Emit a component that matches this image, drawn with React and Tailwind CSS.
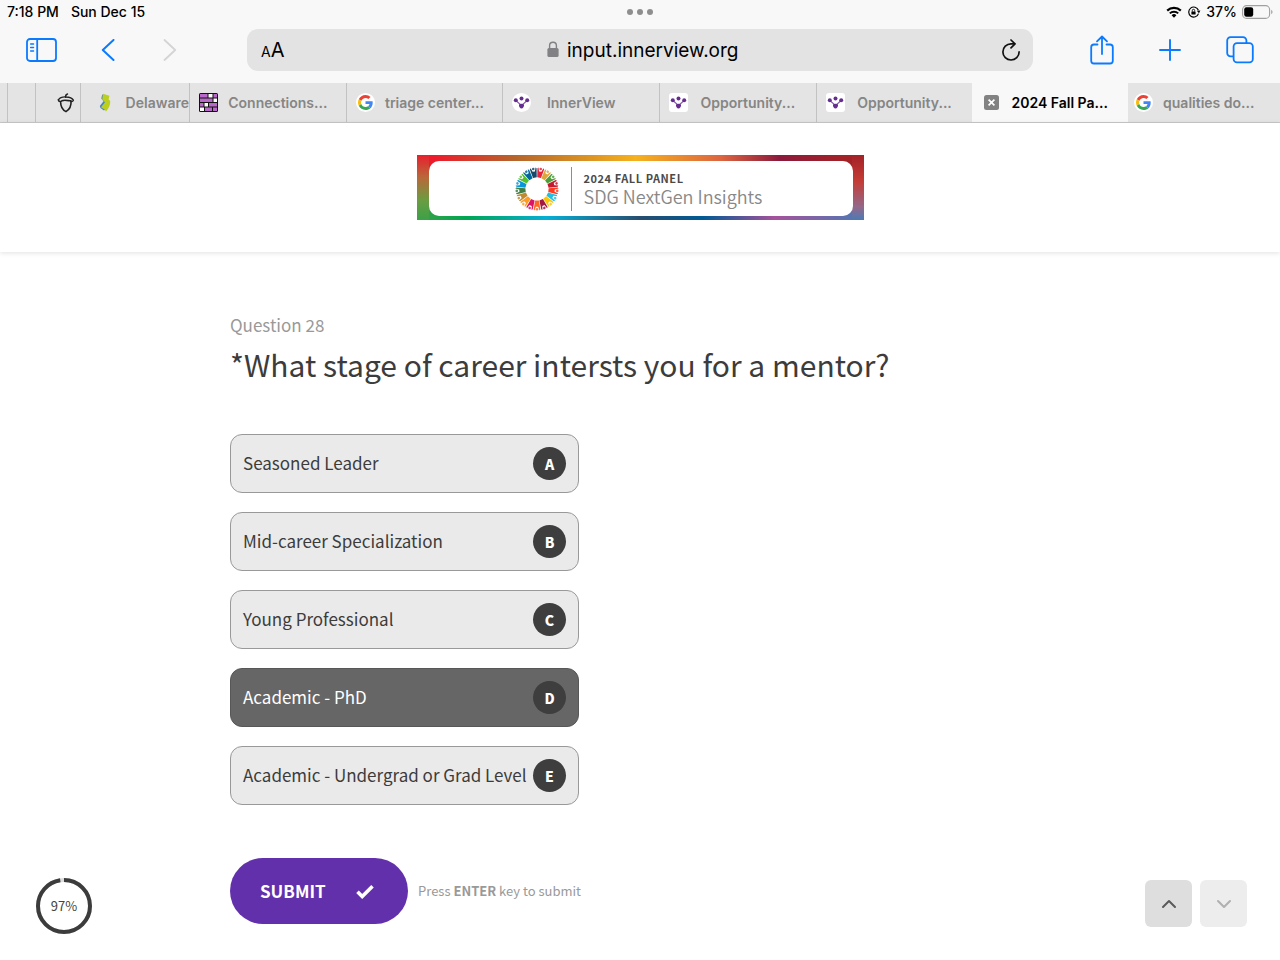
import { useState } from 'react';
import { ChevronDown, ChevronUp } from 'lucide-react';

const tabs = [
  { icon: 'purple', title: 'Connections...' },
  { icon: 'google', title: 'triage center...' },
  { icon: 'innerRound', title: 'InnerView', centered: true },
  { icon: 'inner', title: 'Opportunity...' },
  { icon: 'inner', title: 'Opportunity...' },
  { icon: 'close', title: '2024 Fall Pa...', active: true },
];

const options = [
  { key: 'A', label: 'Seasoned Leader' },
  { key: 'B', label: 'Mid-career Specialization' },
  { key: 'C', label: 'Young Professional' },
  { key: 'D', label: 'Academic - PhD' },
  { key: 'E', label: 'Academic - Undergrad or Grad Level' },
];

const sdgColors = [
  '#e5243b', '#dda63a', '#4c9f38', '#c5192d', '#ff3a21', '#26bde2',
  '#fcc30b', '#a21942', '#fd6925', '#dd1367', '#fd9d24', '#bf8b2e',
  '#3f7e44', '#0a97d9', '#56c02b', '#00689d', '#19486a',
];

function GoogleIcon() {
  return (
    <svg width="19" height="19" viewBox="0 0 19 19" className="shrink-0">
      <circle cx="9.5" cy="9.5" r="9.5" fill="#fff" />
      <g transform="translate(2 2) scale(0.3125)">
        <path fill="#EA4335" d="M24 9.5c3.54 0 6.71 1.22 9.21 3.6l6.85-6.85C35.9 2.38 30.47 0 24 0 14.62 0 6.51 5.38 2.56 13.22l7.98 6.19C12.43 13.72 17.74 9.5 24 9.5z" />
        <path fill="#4285F4" d="M46.98 24.55c0-1.57-.15-3.09-.38-4.55H24v9.02h12.94c-.58 2.96-2.26 5.48-4.78 7.18l7.73 6c4.51-4.18 7.09-10.36 7.09-17.65z" />
        <path fill="#FBBC05" d="M10.53 28.59c-.48-1.45-.76-2.99-.76-4.59s.27-3.14.76-4.59l-7.98-6.19C.92 16.46 0 20.12 0 24c0 3.88.92 7.54 2.56 10.78l7.97-6.19z" />
        <path fill="#34A853" d="M24 48c6.48 0 11.93-2.13 15.89-5.81l-7.73-6c-2.15 1.45-4.92 2.3-8.16 2.3-6.26 0-11.57-4.22-13.47-9.91l-7.98 6.19C6.51 42.62 14.62 48 24 48z" />
      </g>
    </svg>
  );
}

function InnerViewIcon({ round }) {
  return (
    <svg width="19" height="19" viewBox="0 0 19 19" className="shrink-0">
      <rect width="19" height="19" rx={round ? 9.5 : 3} fill="#fff" />
      <path d="M3.8 7.5 9.5 12.5 15.2 7.5" fill="none" stroke="#8a5cae" strokeWidth="1.2" />
      <g fill="#662d91">
        <circle cx="3.8" cy="7.3" r="2" />
        <circle cx="15.2" cy="7.3" r="2" />
        <circle cx="9.5" cy="5.6" r="2" />
        <path d="M7 11.400c1.400-.9 3.600-.9 5 0 .4 2.100-1.100 3.700-2.500 4.200-1.400-.5-2.900-2.100-2.500-4.200z" />
      </g>
    </svg>
  );
}

function ConnectionsIcon() {
  return (
    <svg width="19" height="19" viewBox="0 0 19 19" className="shrink-0">
      <rect width="19" height="19" rx="1.5" fill="#111" />
      <path fill="#b868c8" d="M1 1h7.500v3.500H1zM14.500 1H18v3.500h-3.500zM1 5.500h12.500V9H1zM1 10h3.500v3.500H1zM10 10h8v3.500h-8zM6 14.500h7V18H6zM14 14.500h4V18h-4z" />
      <path fill="#fff" d="M9.500 1h4v3.500h-4zM14.500 5.500H18V9h-3.500zM5.500 10H9v3.500H5.500zM1 14.500h4V18H1z" />
    </svg>
  );
}

function AcornIcon() {
  return (
    <svg width="18" height="20" viewBox="0 0 18 20" fill="none" stroke="#222" strokeLinecap="round" strokeLinejoin="round" className="shrink-0">
      <path d="M8.600 4.200C8.400 2.800 9.200 1.400 10.400 1" strokeWidth="1.600" />
      <path d="M1.400 6.800C2.800 4.600 6 3.800 9.200 4c3.400.1 6 1.200 7.200 3.200-.6 1.400-1.600 1.600-2.600 1.100" strokeWidth="1.300" />
      <path d="M1.400 6.800c.4 2.200 2.400 2.200 3.600 1C7 6.600 12 7.800 14 7.800c.4 4.600-1.200 8.600-5 10.800C5.600 17 3.600 13 3.600 8.800" strokeWidth="1.600" />
    </svg>
  );
}

function DelawareIcon() {
  return (
    <svg width="14" height="19" viewBox="0 0 14 19" className="shrink-0">
      <path fill="#4a86b8" d="M4.200 1.500 3.300 5.500l2.200 2.700-3.700 4.800.7 2 3.500 2.500 2-2-1-13z" />
      <path fill="#bccf1c" d="M5 .8 11.400 2.800l-.8 3.800 1.600 1.400c.2 3.600-1 6.800-4.200 10.600l-1.400-2.200-3.600-2.200L7 9.200 4.200 6.400z" />
    </svg>
  );
}

function CloseIcon() {
  return (
    <svg width="15" height="15" viewBox="0 0 15 15" className="ml-[3px] shrink-0">
      <rect width="15" height="15" rx="2.500" fill="#828282" />
      <path d="m4.600 4.600 5.800 5.800m0-5.800-5.800 5.800" stroke="#fff" strokeWidth="1.700" />
    </svg>
  );
}

function TabIcon({ name }) {
  if (name === 'google') return <GoogleIcon />;
  if (name === 'inner') return <InnerViewIcon />;
  if (name === 'innerRound') return <InnerViewIcon round />;
  if (name === 'purple') return <ConnectionsIcon />;
  return <CloseIcon />;
}

function StatusBar() {
  return (
    <div className="grid h-6 grid-cols-3 items-center px-[7px] text-sm font-medium text-black">
      <div className="flex gap-3">
        <span>7:18 PM</span>
        <span>Sun Dec 15</span>
      </div>
      <div className="flex justify-center gap-1">
        <span className="size-1.5 rounded-full bg-[#8e8e8e]" />
        <span className="size-1.5 rounded-full bg-[#8e8e8e]" />
        <span className="size-1.5 rounded-full bg-[#8e8e8e]" />
      </div>
      <div className="flex items-center justify-end gap-[5px]">
        <svg width="16" height="12" viewBox="0 0 16 12">
          <path d="M1.200 4.600a9.800 9.800 0 0 1 13.600 0" fill="none" stroke="#000" strokeWidth="2.200" />
          <path d="M3.800 7.400a6 6 0 0 1 8.400 0" fill="none" stroke="#000" strokeWidth="2" />
          <path d="M8 11.700 5.600 9.200a3.500 3.500 0 0 1 4.800 0z" />
        </svg>
        <svg width="14" height="12" viewBox="0 0 14 12">
          <path d="M11.400 4.200A5 5 0 1 0 11.500 7.600" fill="none" stroke="#000" strokeWidth="1.200" />
          <path d="m9.800 4.800 3.600-.2-1.400 2.600z" />
          <rect x="4.400" y="5.400" width="4.200" height="3.200" rx=".5" />
          <path d="M5.300 5.600V4.500a1.200 1.200 0 0 1 2.400 0v1.100" fill="none" stroke="#000" strokeWidth=".9" />
        </svg>
        <span>37%</span>
        <svg width="31" height="14" viewBox="0 0 31 14">
          <rect x=".6" y=".6" width="27" height="12.800" rx="4" fill="none" stroke="#a0a0a0" strokeWidth="1.100" />
          <rect x="2.200" y="2.200" width="9" height="9.600" rx="2.200" />
          <path d="M29.200 4.800c1.800.7 1.800 3.700 0 4.400z" fill="#a0a0a0" />
        </svg>
      </div>
    </div>
  );
}

function Toolbar() {
  return (
    <div className="flex h-[59px] items-center pr-[26px] pb-2 pl-[26px]">
      <div className="flex w-[221px] items-center">
        <button aria-label="Sidebar">
          <svg width="31" height="24" viewBox="0 0 31 24" fill="none" stroke="#0a7aff" strokeWidth="1.800" strokeLinecap="round">
            <rect x="1" y="1" width="29" height="22" rx="3" />
            <path d="M11.200 1v22" />
            <path d="M4.600 6h3M4.600 9.500h3M4.600 13h3" strokeWidth="1.300" />
          </svg>
        </button>
        <button aria-label="Back" className="ml-11">
          <svg width="14" height="22" viewBox="0 0 14 22" fill="none" stroke="#0a7aff" strokeWidth="2" strokeLinecap="round" strokeLinejoin="round">
            <path d="M12.500 1 1.800 11l10.700 10" />
          </svg>
        </button>
        <button aria-label="Forward" disabled className="ml-12">
          <svg width="14" height="22" viewBox="0 0 14 22" fill="none" stroke="#d4d4d6" strokeWidth="1.800" strokeLinecap="round" strokeLinejoin="round">
            <path d="m1.500 1 10.700 10L1.500 21" />
          </svg>
        </button>
      </div>
      <div className="flex h-[42px] flex-1 items-center justify-between rounded-[11px] bg-[#e3e3e4] pr-3 pl-3.5 text-black">
        <button aria-label="Page settings" className="flex items-baseline">
          <span className="text-sm">A</span>
          <span className="text-xl">A</span>
        </button>
        <div className="flex items-center gap-2 text-[19px] leading-7">
          <svg width="12" height="17" viewBox="0 0 12 17">
            <path d="M2.600 8V4.600a3.400 3.400 0 0 1 6.800 0V8" fill="none" stroke="#808085" strokeWidth="1.400" />
            <rect x=".4" y="7" width="11.200" height="9" rx="1.600" fill="#808085" />
          </svg>
          <span className="pt-0.5">input.innerview.org</span>
        </div>
        <button aria-label="Reload">
          <svg width="20" height="22" viewBox="0 0 20 22" fill="none" stroke="#111" strokeWidth="1.700" strokeLinecap="round" strokeLinejoin="round">
            <path d="M13.600 4.800H10a8.100 8.100 0 1 0 8.100 8.100" />
            <path d="m10 1 4 3.800-4 4" />
          </svg>
        </button>
      </div>
      <div className="flex items-center justify-end pl-[57px]">
        <button aria-label="Share">
          <svg width="24" height="30" viewBox="0 0 24 30" fill="none" stroke="#0a7aff" strokeWidth="1.800" strokeLinecap="round" strokeLinejoin="round">
            <path d="M7.500 9.500H4A2.800 2.800 0 0 0 1.200 12.300v13.400A2.800 2.800 0 0 0 4 28.500h16a2.800 2.800 0 0 0 2.800-2.800V12.300A2.800 2.800 0 0 0 20 9.500h-3.500" />
            <path d="M12 19V1.500M7 6.400l5-4.900 5 4.900" />
          </svg>
        </button>
        <button aria-label="New tab" className="ml-11">
          <svg width="24" height="22" viewBox="0 0 24 22" fill="none" stroke="#0a7aff" strokeWidth="1.900" strokeLinecap="round">
            <path d="M12 1v20M2 11h20" />
          </svg>
        </button>
        <button aria-label="Show tabs" className="ml-11">
          <svg width="28" height="28" viewBox="0 0 28 28" fill="none" stroke="#0a7aff" strokeWidth="1.800" strokeLinejoin="round">
            <path d="M7.600 20.400H4.600A3.400 3.400 0 0 1 1.200 17V4.600a3.400 3.400 0 0 1 3.400-3.400H17a3.400 3.400 0 0 1 3.400 3.400v2.600" />
            <rect x="7.600" y="7.200" width="19.200" height="19.200" rx="3.400" />
          </svg>
        </button>
      </div>
    </div>
  );
}

function TabBar() {
  return (
    <nav className="flex h-10 border-b border-[#c8c8c8] bg-[#e4e4e4] text-sm font-semibold text-[#868686]">
      <button aria-label="Tab" className="w-2 border-r border-[#c2c2c2]" />
      <button aria-label="Tab" className="w-7 border-r border-[#c2c2c2]" />
      <button aria-label="Acorn" className="flex w-[45px] items-center justify-end border-r border-[#c2c2c2] pr-[5px]">
        <AcornIcon />
      </button>
      <button className="flex w-[109px] items-center justify-between border-r border-[#c2c2c2] pl-[17px]">
        <DelawareIcon />
        <span>Delaware</span>
      </button>
      {tabs.map((tab, i) => (
        <button
          key={i}
          className={`flex min-w-0 flex-1 items-center pl-[9px] ${
            tab.active ? 'bg-[#f8f8f8] text-black' : i < 4 ? 'border-r border-[#c2c2c2]' : ''
          }`}
        >
          <TabIcon name={tab.icon} />
          <span className={`flex-1 text-center whitespace-nowrap ${tab.centered ? 'pr-7' : 'pr-2'}`}>{tab.title}</span>
        </button>
      ))}
      <button className="flex w-[152px] items-center gap-2.5 pl-1.5 whitespace-nowrap">
        <GoogleIcon />
        <span>qualities do...</span>
      </button>
    </nav>
  );
}

// ring of little figures, arms raised outwards
function SdgWheel() {
  const step = 360 / sdgColors.length;
  return (
    <svg width="44" height="44" viewBox="-22 -22 44 44" className="shrink-0">
      {sdgColors.map((color, i) => (
        <g key={color} transform={`rotate(${i * step + step / 2})`}>
          <path d="M-1.900-11.500h3.800L3.400-20.500l-.9-1-1.300 3.800h-2.400l-1.300-3.800-.9 1z" fill={color} />
          <circle cy="-20.300" r="1.300" fill={color} opacity=".85" />
        </g>
      ))}
    </svg>
  );
}

function Banner() {
  return (
    <header className="flex justify-center bg-white py-8 shadow-[0_1px_5px_rgba(0,0,0,0.12)]">
      <div className="w-[447px] bg-[linear-gradient(to_bottom,#e8202d,#b8693a_35%,#6a9d42_70%,#3ba148),linear-gradient(to_bottom,#a32227,#c43c35_40%,#94688a_80%,#4a7ab5),linear-gradient(to_right,#ec1c2d_4%,#b5652b_22%,#f5b11e_49%,#dd6540_68%,#8c1a3c_81%,#a32227_95%),linear-gradient(to_right,#3ba148,#00a651_11%,#06aed5_29%,#274d70_50%,#005a94_64%,#a5529b_80%,#4a7ab5)] bg-[length:12px_100%,12px_100%,100%_50%,100%_50%] bg-[position:left,right,top,bottom] bg-no-repeat pt-1.5 pr-[11px] pb-1 pl-3">
        <div className="flex h-[55px] items-center rounded-[10px] bg-white pl-[86px]">
          <SdgWheel />
          <div className="ml-3 h-11 w-px bg-[#8d8d8d]" />
          <div className="ml-3 pb-0.5 font-['Noto_Sans_CJK_SC',sans-serif] whitespace-nowrap">
            <p className="text-[11px] leading-4 font-bold tracking-wider text-[#4a4a4a]">2024 FALL PANEL</p>
            <p className="text-lg leading-5 font-[350] text-[#888]">SDG NextGen Insights</p>
          </div>
        </div>
      </div>
    </header>
  );
}

function ProgressRing({ percent }) {
  const length = 2 * Math.PI * 26;
  return (
    <div className="grid size-[58px] place-items-center">
      <svg width="58" height="58" viewBox="0 0 58 58" fill="none" strokeWidth="4" className="col-start-1 row-start-1">
        <circle cx="29" cy="29" r="26" stroke="#ddd" />
        <circle
          cx="29"
          cy="29"
          r="26"
          stroke="#3c3c3c"
          strokeDasharray={`${(length * percent) / 100} ${length}`}
          transform="rotate(-90 29 29)"
        />
      </svg>
      <span className="col-start-1 row-start-1 text-[13px] text-[#444]">{percent}%</span>
    </div>
  );
}

export default function App() {
  const [selected, setSelected] = useState('D');

  return (
    <div className="flex min-h-screen flex-col bg-white font-['Inter',sans-serif]">
      <div className="bg-[#f8f8f8]">
        <StatusBar />
        <Toolbar />
        <TabBar />
      </div>
      <Banner />

      <div className="flex flex-1 font-['Noto_Sans_CJK_SC',sans-serif] text-[#3c3c3c]">
        <aside className="flex w-[230px] shrink-0 items-end pb-[25px] pl-[35px]">
          <ProgressRing percent={97} />
        </aside>

        <form className="flex-1 pt-[61px]" onSubmit={(e) => e.preventDefault()}>
          <p className="text-[17px] leading-6 text-[#999]">Question 28</p>
          <h1 className="mt-1 text-[30px] leading-[46px]">*What stage of career intersts you for a mentor?</h1>

          <fieldset className="mt-[47px] flex w-[349px] flex-col gap-[19px]">
            {options.map((option) => (
              <label
                key={option.key}
                className={`flex h-[59px] cursor-pointer items-center justify-between rounded-xl border px-3 text-[17px] whitespace-nowrap ${
                  selected === option.key ? 'border-[#575757] bg-[#666] text-white' : 'border-[#999] bg-[#eaeaea]'
                }`}
              >
                <input
                  type="radio"
                  name="stage"
                  value={option.key}
                  checked={selected === option.key}
                  onChange={() => setSelected(option.key)}
                  className="sr-only"
                />
                <span className="pb-0.5">{option.label}</span>
                <span className="flex size-[33px] shrink-0 items-center justify-center rounded-full bg-[#3e3e3e] text-sm font-black text-white">
                  {option.key}
                </span>
              </label>
            ))}
          </fieldset>

          <div className="mt-[53px] flex items-center gap-2.5">
            <button type="submit" className="flex h-[66px] w-[178px] items-center justify-between rounded-full bg-[#6330ac] pr-[34px] pl-[30px] text-[17px] font-bold text-white">
              SUBMIT
              <svg width="18" height="15" viewBox="0 0 18 15" fill="none" stroke="#fff" strokeWidth="3.600">
                <path d="m1.500 7.800 4.700 4.700L16.500 2.200" />
              </svg>
            </button>
            <p className="text-[13px] text-[#999]">
              Press <b>ENTER</b> key to submit
            </p>
          </div>
        </form>

        <div className="flex items-end gap-2 pr-[33px] pb-[33px]">
          <button aria-label="Previous question" className="flex size-[47px] items-center justify-center rounded-md bg-[#dedede] text-[#5a5a5a]">
            <ChevronUp size={24} />
          </button>
          <button aria-label="Next question" disabled className="flex size-[47px] items-center justify-center rounded-md bg-[#ededed] text-[#b0b0b0]">
            <ChevronDown size={24} />
          </button>
        </div>
      </div>
    </div>
  );
}
